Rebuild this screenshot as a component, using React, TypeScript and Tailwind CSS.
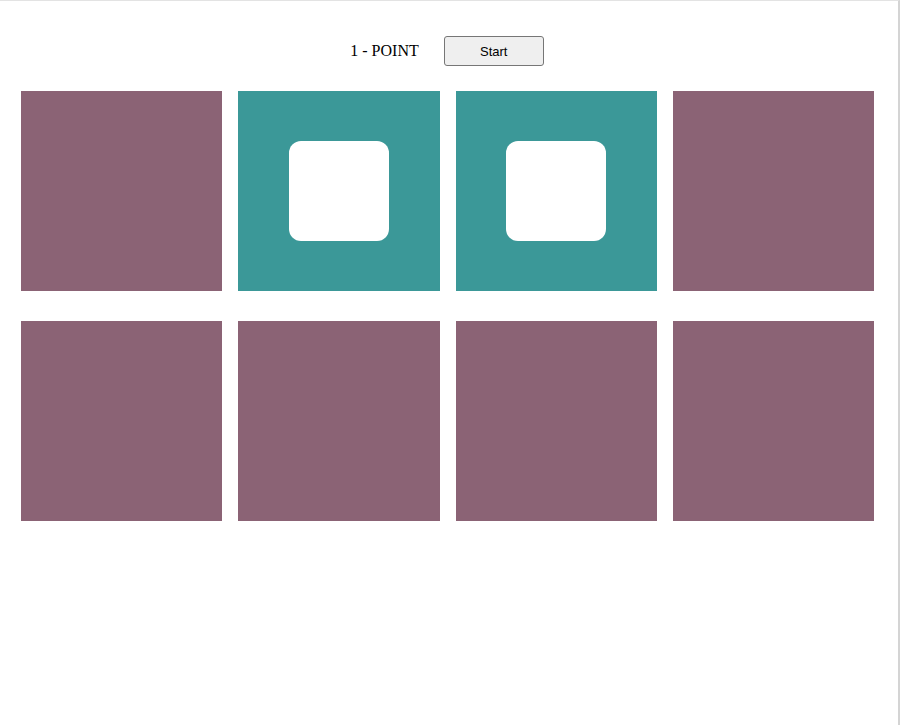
import React from 'react';

const cells = [false, true, true, false, false, false, false, false];

export default function App() {
  return (
    <div className="w-[900px] h-[725px] bg-white border-t border-t-[#e3e3e3] border-r-2 border-r-[#d4d4d4]">
      <div className="flex items-center justify-center gap-[25px] pt-[35px] pr-[4px]">
        <span className="text-base text-black" style={{ fontFamily: '"Liberation Serif", serif' }}>
          1 - POINT
        </span>
        <button
          className="w-[100px] h-[30px] pt-px bg-[#efefef] border border-[#767676] rounded-[3px] text-[13px] text-black"
          style={{ fontFamily: '"Liberation Sans", Arial, sans-serif' }}
        >
          Start
        </button>
      </div>
      <div className="ml-[21px] w-[853px] mt-[25px] grid grid-cols-4 gap-x-4 gap-y-[30px]">
        {cells.map((on, i) => (
          <div
            key={i}
            className={`h-[200px] flex items-center justify-center ${on ? 'bg-[#3b9898]' : 'bg-[#8b6375]'}`}
          >
            {on && <div className="w-[100px] h-[100px] bg-white rounded-xl" />}
          </div>
        ))}
      </div>
    </div>
  );
}
